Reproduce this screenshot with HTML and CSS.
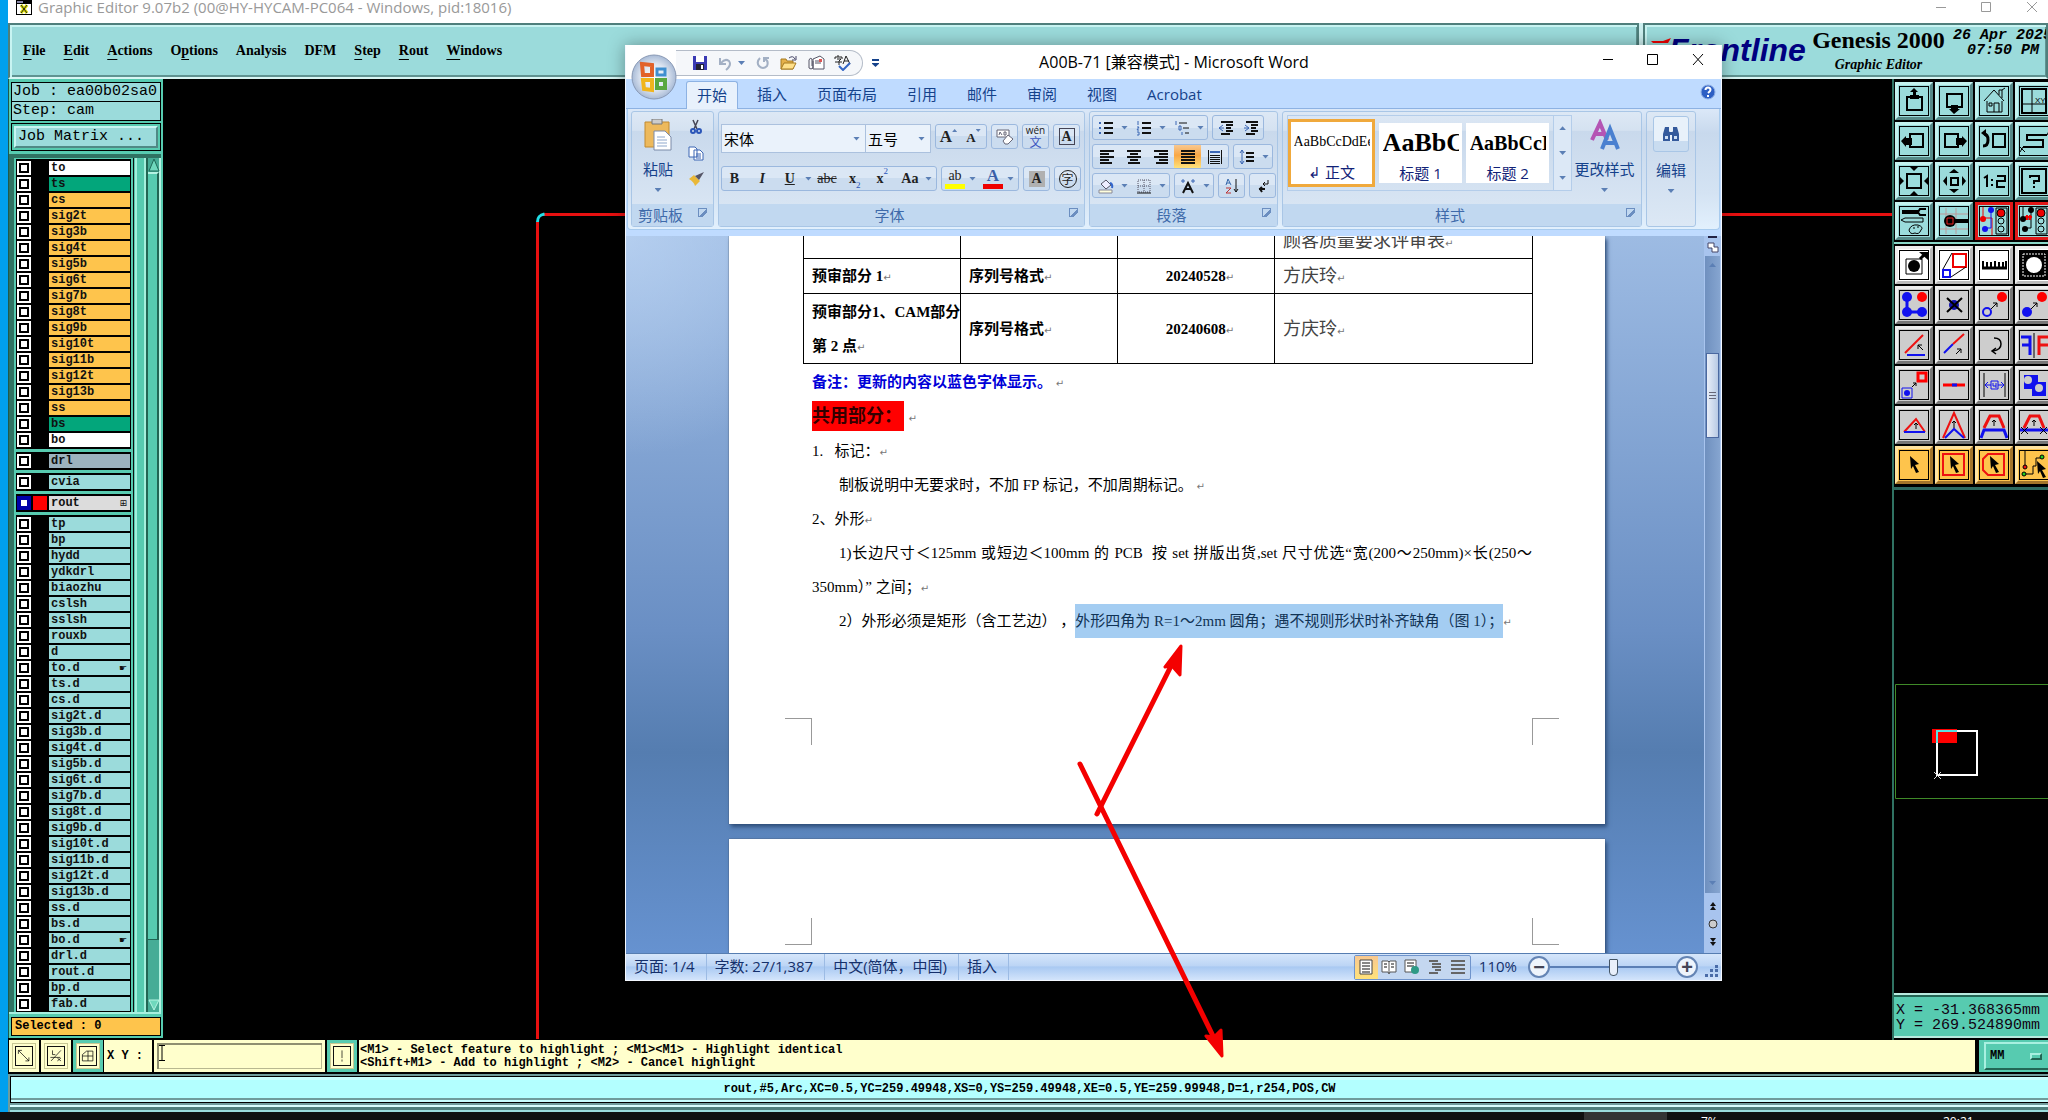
FILE: index.html
```html
<!DOCTYPE html>
<html lang="zh-CN">
<head>
<meta charset="utf-8">
<title>Graphic Editor</title>
<link rel="stylesheet" href="styles.css">
</head>
<body>
<div class="desktop">
<main class="app">
  <header class="app-title">
    <svg class="app-icon" width="16" height="16" viewBox="0 0 16 16"><path d="M0 0h16v15H0z" fill="#000"/><path d="M1 1h6v2H1z" fill="#88a"/><path d="M1 4h14v10H1z" fill="#fff"/><path d="M5 5l6 8M11 5l-6 8" stroke="#dd0" stroke-width="3"/><path d="M5 5l6 8M11 5l-6 8" stroke="#222"/></svg>
    <span>Graphic Editor 9.07b2 (00@HY-HYCAM-PC064 - Windows, pid:18016)</span>
    <svg class="app-ctl" width="110" height="16" viewBox="0 0 110 16" fill="none" stroke="#999"><path d="M4 7.500h10M49.500 2.500h9v9h-9zM95 2l10 10M105 2l-10 10"/></svg>
  </header>
  <div class="topbar">
    <nav class="menu">
      <button><u>F</u>ile</button><button><u>E</u>dit</button><button><u>A</u>ctions</button><button>O<u>p</u>tions</button><button>Analysis</button><button>DFM</button><button><u>S</u>tep</button><button><u>R</u>out</button><button><u>W</u>indows</button>
    </nav>
    <div class="brand">
      <div class="logo"><svg width="22" height="8" viewBox="0 0 22 8"><path d="M0 3h12l8-3-3 5H2z" fill="#e00"/></svg><span>Frontline</span></div>
      <div class="product"><strong>Genesis 2000</strong><em>Graphic Editor</em></div>
      <div class="clock"><span>26 Apr 2025</span><span>07:50 PM</span></div>
    </div>
  </div>
  <div class="work">
    <aside class="layers">
      <div class="info">Job : ea00b02sa0</div>
      <div class="info">Step: cam</div>
      <div class="matrix"><button>Job Matrix ...</button></div>
      <div class="list-wrap">
        <div class="list" id="layer-list"></div>
        <div class="rail"></div>
        <div class="lscroll"><button aria-label="Up"><svg width="12" height="14" viewBox="0 0 12 14"><path d="M6 1l5 12H1z" fill="#6fd8bd" stroke="#1f6a58"/></svg></button><div class="lthumb"></div><button aria-label="Down"><svg width="12" height="12" viewBox="0 0 12 12"><path d="M1 1h10L6 11z" fill="#6fd8bd" stroke="#b4f3e2"/></svg></button></div>
      </div>
      <div class="selected">Selected : 0</div>
    </aside>
    <section class="canvas">
      <svg class="board" width="1400" height="960" viewBox="0 0 1400 960" fill="none"><path d="M8 135.500H1400M2.500 143V960" stroke="#e81010" stroke-width="3"/><path d="M2.500 143c0-5 2-7 7-8" stroke="#22dfe8" stroke-width="3"/></svg>
    </section>
    <aside class="tools">
      <div class="grid teal">
        <button><svg viewBox="0 0 30 30"><path d="M8 11h15v13H8z"/><path class="f" d="M15 2l4 4h-2v3h3v4h-9V9h3V6h-3z"/></svg></button>
        <button><svg viewBox="0 0 30 30"><path d="M8 8h15v13H8z"/><path class="f" d="M15 28l-5-5h2v-4h7v4h2z"/></svg></button>
        <button><svg viewBox="0 0 30 30"><path class="t" d="M5 15L15 4l10 11M8 15v11h15V15M15 26v-9h5v9M10 17h3v3h-3zM20 9V4h3v8M23 4l3-2"/></svg></button>
        <button><svg viewBox="0 0 30 30"><path d="M3 3h24v24H3z"/><path class="t" d="M13 3v24M3 18h24"/><text x="16" y="17" font-size="8">XY</text></svg></button>
        <button><svg viewBox="0 0 30 30"><path d="M11 8h13v13H11z"/><path class="f" d="M2 15l5-5v2h6v7H7v2z"/></svg></button>
        <button><svg viewBox="0 0 30 30"><path d="M6 8h13v13H6z"/><path class="f" d="M28 15l-5-5v2h-6v7h6v2z"/></svg></button>
        <button><svg viewBox="0 0 30 30"><path d="M14 8h12v13H14z"/><path stroke-width="3" d="M5 8q4 0 4 6t-5 6"/><path class="f" d="M2 7l5-4v8z"/></svg></button>
        <button><svg viewBox="0 0 30 30"><path d="M28 9H8v5h16v7H4"/><path class="t" d="M28 9l2-4M4 21l-3 5M1 21l5 5"/></svg></button>
        <button><svg viewBox="0 0 30 30"><path d="M8 8h14v14H8z"/><path class="f" d="M11 1h8l-4 4zM11 29h8l-4-4zM1 11v8l4-4zM29 11v8l-4-4z"/></svg></button>
        <button><svg viewBox="0 0 30 30"><path d="M12 12h7v7h-7z"/><path class="f" d="M15 3l5 4H10zM15 27l5-4H10zM4 15l4-5v10zM27 15l-4-5v10z"/></svg></button>
        <button><svg viewBox="0 0 30 30"><path d="M5 12l3-2v11M13 13v2M13 18v2M18 10h8v5h-8v6h8"/></svg></button>
        <button><svg viewBox="0 0 30 30"><path d="M3 3h24v24H3z"/><path d="M11 12v-2h9v5h-5v3M15 20v2"/></svg></button>
        <button><svg viewBox="0 0 30 30"><path stroke-width="4" d="M3 6h16"/><path d="M27 3h-6l-2 3 2 3h6"/><path class="t" d="M2 14l4-2h18v4H6zM10 24q2-6 9-5 6 2 3 5-2 5-6 3-5 2-6-3M14 22h2M18 21h2"/></svg></button>
        <button><svg viewBox="0 0 30 30"><path stroke="#b99" stroke-width="1" d="M7 2v26M17 2v26M1 8h28M1 23h28"/><circle class="f" cx="11" cy="15" r="6"/><path stroke-width="4" d="M16 15h13"/><path stroke="#e22" stroke-width="1" d="M8 12h6v6H8z"/></svg></button>
        <button class="hot"><svg viewBox="0 0 30 30"><path stroke="#e00" stroke-width="1" d="M4 1v11h9v17"/><path stroke="#11e" stroke-width="1" d="M12 4v18H7"/><circle cx="4" cy="13" r="3" fill="#e00" stroke="none"/><circle cx="12" cy="4" r="3" fill="#11e" stroke="none"/><circle cx="6" cy="23" r="3" fill="#11e" stroke="none"/><path class="t" d="M17 2h11v26H17z"/><circle class="t" cx="22" cy="7" r="4" style="fill:#e00"/><circle class="t" cx="22" cy="15" r="3"/><circle class="t" cx="22" cy="23" r="3"/></svg></button>
        <button class="hot"><svg viewBox="0 0 30 30"><path class="t" d="M4 1v12h8M12 4v18H7"/><path stroke="#e00" d="M6 11h7M8 9v5M11 9v5"/><circle class="f" cx="4" cy="13" r="3"/><circle class="f" cx="12" cy="4" r="3"/><circle class="f" cx="6" cy="23" r="3"/><path class="t" d="M17 2h11v26H17z"/><circle class="t" cx="22" cy="7" r="4" style="fill:#e00"/><circle class="t" cx="22" cy="15" r="3"/><circle class="t" cx="22" cy="23" r="3"/></svg></button>
      </div>
      <div class="grid gray">
        <button class="w"><svg viewBox="0 0 30 30"><path class="t" d="M7 9h16v15H7z"/><circle class="f" cx="15" cy="16" r="6"/><path stroke-width="3" d="M21 9l4-4"/><path class="f" d="M20 2h9v8z"/></svg></button>
        <button class="w"><svg viewBox="0 0 30 30"><path stroke="#e00" d="M14 4h13v13H14z"/><path stroke="#11e" d="M4 20h7v7H4z"/><path class="t" d="M4 19L13 3M12 27l15-10"/></svg></button>
        <button class="w"><svg viewBox="0 0 30 30"><path stroke-width="3" d="M3 18h25"/><path stroke-width="2" d="M4 11v6M8 12v5M12 12v5M16 11v6M20 12v5M24 12v5M27 11v6"/></svg></button>
        <button class="w"><svg viewBox="0 0 30 30"><path class="f" d="M1 1h28v28H1z"/><path stroke="#fff" stroke-width="1" stroke-dasharray="2 1" d="M4 4h22v22H4z"/><circle cx="15" cy="15" r="8" fill="#fff" stroke="none"/></svg></button>
        <button><svg viewBox="0 0 30 30"><path stroke="#11e" stroke-width="3" d="M8 7v15h15"/><g stroke="none"><circle cx="8" cy="7" r="5" fill="#11e"/><circle cx="8" cy="22" r="5" fill="#11e"/><circle cx="23" cy="22" r="5" fill="#11e"/><circle cx="23" cy="7" r="5" fill="#f00"/></g></svg></button>
        <button><svg viewBox="0 0 30 30"><circle cx="15" cy="15" r="5" fill="#11a" stroke="none"/><path d="M8 8l15 14M23 8L8 22"/></svg></button>
        <button><svg viewBox="0 0 30 30"><circle cx="23" cy="7" r="5" fill="#f00" stroke="none"/><circle cx="8" cy="22" r="4" stroke="#11e"/><path class="t" d="M12 19l6-6M14 13h4v4"/></svg></button>
        <button><svg viewBox="0 0 30 30"><circle cx="23" cy="7" r="5" fill="#f00" stroke="none"/><circle cx="8" cy="22" r="5" fill="#11e" stroke="none"/><path class="t" d="M12 19l6-6M14 13h4v4"/></svg></button>
        <button><svg viewBox="0 0 30 30"><path stroke="#e11" d="M6 23L24 5"/><path stroke="#11e" d="M8 25h18"/><path class="t" d="M24 20l-5-5v4M19 15h4"/></svg></button>
        <button><svg viewBox="0 0 30 30"><path stroke="#11e" d="M5 23l9-9"/><path stroke="#e11" d="M14 14l11-10"/><path class="t" d="M17 24l5-5M18 19h4v4"/></svg></button>
        <button><svg viewBox="0 0 30 30"><path stroke-width="1.500" d="M15 8q7 0 7 6t-8 7M17 18l-4 3 4 3"/></svg></button>
        <button><svg viewBox="0 0 30 30"><path stroke="#11e" stroke-width="3" d="M2 7h9v18M3 15h8"/><path class="t" d="M15 3v25"/><path stroke="#e11" stroke-width="3" d="M29 7h-9v18M20 15h9"/></svg></button>
        <button><svg viewBox="0 0 30 30"><path stroke="#f00" stroke-width="3" d="M19 3h8v8h-8z"/><path stroke="#11e" stroke-width="1" d="M3 18h10v10H3z"/><circle cx="8" cy="23" r="3" fill="#11e" stroke="none"/><path class="t" d="M13 17l4-4M14 13h3v3"/></svg></button>
        <button><svg viewBox="0 0 30 30"><path stroke="#f00" d="M4 15h22" stroke-width="3"/><path stroke="#11e" stroke-width="3" d="M13 15h5"/></svg></button>
        <button><svg viewBox="0 0 30 30"><path class="t" d="M5 3v24M26 3v24"/><path stroke="#11e" stroke-width="1" d="M12 11h7v8h-7zM6 15h6M19 15h6M9 12l-3 3 3 3M22 12l3 3-3 3M14 13v3h3M17 13v5"/></svg></button>
        <button><svg viewBox="0 0 30 30"><path fill="#11e" stroke="none" d="M5 5h14v7h8v14H13v-7H5z"/><circle cx="9" cy="10" r="4" fill="#ccc" stroke="none"/><circle cx="20" cy="18" r="5" fill="#ccc" stroke="#11e"/></svg></button>
        <button><svg viewBox="0 0 30 30"><path stroke="#e11" d="M5 22L17 9l9 13"/><path stroke="#11e" d="M5 22h21"/><path class="t" d="M17 19v-6M15 15l2-2 2 2"/></svg></button>
        <button><svg viewBox="0 0 30 30"><path stroke="#e11" d="M4 28L15 3l11 25"/><path stroke="#11e" d="M6 28l9-9 10 9"/><path class="t" d="M15 18v-7M13 13l2-2 2 2"/></svg></button>
        <button><svg viewBox="0 0 30 30"><path stroke="#e11" stroke-width="3" d="M5 18l6-12h9l5 12"/><path stroke="#11e" stroke-width="3" d="M2 28l3-8h20l3 8"/><path class="t" d="M15 16v-6M13 12l2-2 2 2"/></svg></button>
        <button><svg viewBox="0 0 30 30"><path stroke="#e11" stroke-width="3" d="M5 18l6-12h9l5 12"/><path stroke="#11e" stroke-width="3" d="M1 20h28"/><path class="t" d="M15 16v-6M13 12l2-2 2 2M2 17l7 7M9 17l-7 7M21 17l7 7M28 17l-7 7"/></svg></button>
        <button class="o"><svg viewBox="0 0 30 30"><path class="f" d="M11 6l9 8-4 1 4 7-3 1-3-7-2 3z"/></svg></button>
        <button class="o"><svg viewBox="0 0 30 30"><path stroke="#e11" d="M4 4h21v21H4z"/><path class="f" d="M11 6l9 8-4 1 4 7-3 1-3-7-2 3z"/></svg></button>
        <button class="o"><svg viewBox="0 0 30 30"><path stroke="#e11" d="M9 4h16v21H9l-5-5V9z"/><path class="f" d="M11 6l9 8-4 1 4 7-3 1-3-7-2 3z"/></svg></button>
        <button class="o"><svg viewBox="0 0 30 30"><path class="t" d="M6 1v16M6 24h8v-8h3V8h5"/><circle class="t" cx="6" cy="17" r="2" style="fill:#e11"/><circle class="t" cx="5" cy="24" r="2" style="fill:#2c2"/><circle class="t" cx="23" cy="7" r="2" style="fill:#2c2"/><path class="f" d="M18 11l9 8-4 1 4 7-3 1-3-7-2 3z"/></svg></button>
      </div>
      <div class="overview"><svg width="156" height="504" viewBox="0 0 156 504" fill="none"><path d="M1.500 194.500h160v114H1.500z" stroke="#3f8a28"/><path d="M38 239h25v14H38z" fill="#f00"/><path d="M43 241h40v44H43z" stroke="#fff" stroke-width="2"/><path d="M43 253v-12h20" stroke="#5ae0e0" stroke-width="2"/><path d="M40 282l7 7M47 282l-7 7" stroke="#ddd"/></svg></div>
      <div class="coords"><span>X = -31.368365mm</span><span>Y = 269.524890mm</span></div>
    </aside>
  </div>
  <div class="command">
    <button class="cmd"><svg viewBox="0 0 20 20"><path d="M2 7V2h5M2 2l15 15M12 17h5v-5"/></svg></button>
    <button class="cmd"><svg viewBox="0 0 20 20"><path d="M3 17L17 2M5 2v6h4M2 12h14M12 13l5 4M12 17l5-4"/></svg></button>
    <button class="cmd on"><svg viewBox="0 0 20 20"><path d="M2 17V8l6-5h9v14zM10 3v14M2 10h15"/></svg></button>
    <label for="xy">X Y :</label>
    <div class="xy-box"><input id="xy" class="xy" type="text" value=""><svg class="ibeam" width="6" height="16" viewBox="0 0 6 16"><path d="M0 .5h6M0 15.500h6M3 0v16" fill="none" stroke="#000"/></svg></div>
    <button class="cmd on"><svg viewBox="0 0 20 20"><path d="M10 2v11M10 15v3"/></svg></button>
    <div class="hint"><span>&lt;M1&gt; - Select feature to highlight ; &lt;M1&gt;&lt;M1&gt; - Highlight identical</span><span>&lt;Shift+M1&gt; - Add to highlight ; &lt;M2&gt; - Cancel highlight</span></div>
    <div class="unit"><button>MM<i></i></button></div>
  </div>
  <footer class="status"><div class="status-in">rout,#5,Arc,XC=0.5,YC=259.49948,XS=0,YS=259.49948,XE=0.5,YE=259.99948,D=1,r254,POS,CW</div><div class="status-edge"></div></footer>
</main>
<div class="taskbar"><span class="task-on"></span><span class="pct">7%</span><span class="time">20:21</span></div>

<section class="word">
  <header class="w-title">
    <div class="qat">
      <button aria-label="保存"><svg width="16" height="16" viewBox="0 0 16 16"><path d="M1 1h14v14H1z" fill="#3a3ab4"/><path d="M4 1h8v6H4z" fill="#fff"/><path d="M4 9h8v6H4z" fill="#223"/><path d="M9 10h2v4H9z" fill="#fff"/></svg></button>
      <button aria-label="撤消"><svg width="16" height="16" viewBox="0 0 16 16"><path d="M3 3v6h6M4 8q4-5 8-2 3 4-3 9" fill="none" stroke="#a3b0c4" stroke-width="2"/></svg></button>
      <i class="dd"></i>
      <button aria-label="重复"><svg width="16" height="16" viewBox="0 0 16 16"><path d="M5 3q-4 4-1 8 4 4 8 0 2-5-2-7M9 7V3h5" fill="none" stroke="#a3b0c4" stroke-width="2"/></svg></button>
      <button aria-label="打开"><svg width="18" height="16" viewBox="0 0 18 16"><path d="M1 14V4h5l1 2h6v8z" fill="#e5b04a" stroke="#a67a20"/><path d="M1 14l3-6h12l-3 6z" fill="#ffe08a" stroke="#a67a20"/><path d="M9 3q4-3 6 1M16 1v4h-4" fill="none" stroke="#446"/></svg></button>
      <button aria-label="邮件"><svg width="18" height="16" viewBox="0 0 18 16" fill="#fff" stroke="#556"><path d="M6 4l7-3 4 3v10H6z"/><path d="M8 6h6M8 8h6" /><path d="M12 4h3v3h-3z" fill="#d55" stroke="none"/><path d="M6 6v7q-2 2-4 0V5q1-3 3-1v7" fill="none"/></svg></button>
      <button aria-label="拼写"><svg width="18" height="16" viewBox="0 0 18 16" fill="none" stroke="#222"><path d="M4 0v2M1 4V2h7v2M3 4h4L5 6v4M1 7h7M9 9l3-8 4 8M10 6h5"/><path d="M5 11l4 4 7-7" stroke="#3466c4" stroke-width="2"/></svg></button>
    </div>
    <i class="qat-more"></i>
    <h1>A00B-71 [兼容模式] - Microsoft Word</h1>
    <svg class="w-ctl" width="106" height="16" viewBox="0 0 106 16" fill="none" stroke="#000"><path d="M2 8.500h10M46.500 3.500h10v10h-10zM92 3l10 11M102 3L92 14"/></svg>
  </header>
  <button class="orb" aria-label="Office"><svg width="46" height="46" viewBox="0 0 46 46"><defs><radialGradient id="orb"><stop offset="0" stop-color="#fff"/><stop offset=".6" stop-color="#dde5f1"/><stop offset="1" stop-color="#a9bbd6"/></radialGradient></defs><circle cx="23" cy="23" r="22" fill="url(#orb)" stroke="#8898b4"/><g fill="none" stroke-width="4"><path d="M21 11l-10-1 1 11h9z" stroke="#e2622a"/><path d="M26 15h8v6h-8z" stroke="#3f8fd0" stroke-width="3"/><path d="M12 26h9v10l-8-1z" stroke="#f0b51e"/><path d="M26 26h8v8h-8z" stroke="#5aa840"/></g></svg></button>
  <nav class="tabs"><button class="on">开始</button><button>插入</button><button>页面布局</button><button>引用</button><button>邮件</button><button>审阅</button><button>视图</button><button>Acrobat</button>
    <svg class="help" width="16" height="16" viewBox="0 0 16 16"><circle cx="8" cy="8" r="7" fill="#2d5fc4" stroke="#8fb0e4"/><path d="M5.500 6q0-2.500 2.500-2.500T10.500 6q0 1-2.500 3M8 11v2" fill="none" stroke="#fff" stroke-width="2"/></svg></nav>
  <div class="ribbon">
    <section class="g g-clip"><div class="gb">
      <button class="big"><svg width="28" height="32" viewBox="0 0 28 32"><path d="M1 3h24v25H1z" fill="#edb95c" stroke="#c18a30"/><path d="M8 0h10v5H8z" fill="#ccc" stroke="#777"/><path d="M10 12h11l6 6v13H10z" fill="#fff" stroke="#7a8aa8"/><path d="M13 18h8M13 21h10M13 24h10M13 27h10" stroke="#8fa8cc"/></svg><span>粘贴</span><i class="dd"></i></button>
      <div class="vs">
        <button aria-label="剪切"><svg width="16" height="16" viewBox="0 0 16 16" fill="none"><path d="M5 1l4 9M10 1L6 10" stroke="#445" stroke-width="1.500"/><circle cx="5" cy="12" r="2" stroke="#2a55b8" stroke-width="2"/><circle cx="11" cy="12" r="2" stroke="#2a55b8" stroke-width="2"/></svg></button>
        <button aria-label="复制"><svg width="16" height="16" viewBox="0 0 16 16" fill="#fff" stroke="#3c66b4"><path d="M1 2h6l2 2v8H1zM6 5h6l3 3v7H6z"/><path d="M8 9h5M8 11h5M8 13h5"/></svg></button>
        <button aria-label="格式刷"><svg width="16" height="16" viewBox="0 0 16 16"><path d="M1 8l5-4 6 6-5 5q-1-4-6-7z" fill="#e9b838"/><path d="M7 5l4 4 5-8z" fill="#556"/></svg></button>
      </div></div><footer>剪贴板<b class="lch"></b></footer></section>
    <section class="g g-font"><div class="gb col">
      <div class="r"><div class="sel-box fname"><select aria-label="字体"><option>宋体</option></select><i class="dd"></i></div><div class="sel-box fsize"><select aria-label="字号"><option>五号</option></select><i class="dd"></i></div>
        <div class="bg"><button class="s20">A<i class="dd up"></i></button><button class="s14">A<i class="dd"></i></button></div>
        <div class="bg"><button aria-label="清除格式"><svg width="18" height="16" viewBox="0 0 18 16" fill="#fff" stroke="#667"><path d="M1 1h12v7H1z"/><path d="M3 6l1-3 2 3M8 3h2v3H8zM7 12l5-6 5 4-5 5H9z"/></svg></button></div>
        <div class="bg"><button class="wen"><small>wén</small><span>文</span></button></div>
        <div class="bg"><button><b class="boxed">A</b></button></div></div>
      <div class="r"><div class="bg biu"><button><b>B</b></button><button><b><i>I</i></b></button><button><b><u>U</u></b></button><i class="dd"></i><button><s>abc</s></button><button><b>x</b><sub>2</sub></button><button><b>x</b><sup>2</sup></button><button><b>Aa</b></button><i class="dd"></i></div>
        <div class="bg hl"><button class="sw y">ab</button><i class="dd"></i><button class="sw rd">A</button><i class="dd"></i></div>
        <div class="bg"><button><b class="shade">A</b></button></div>
        <div class="bg"><button aria-label="带圈字符"><span class="ring">字</span></button></div></div>
    </div><footer>字体<b class="lch"></b></footer></section>
    <section class="g g-para"><div class="gb col">
      <div class="r"><div class="bg"><button><svg class="ic" viewBox="0 0 16 16"><path class="k" d="M6 3h9M6 8h9M6 13h9"/><path class="b" d="M1 3h2M1 8h2M1 13h2"/></svg></button><i class="dd"></i><button><svg class="ic" viewBox="0 0 16 16"><path class="k" d="M6 3h9M6 8h9M6 13h9"/><path class="b n" d="M2 1v4M1 7h2l-2 3h2M1 12h2v3H1"/></svg></button><i class="dd"></i><button><svg class="ic" viewBox="0 0 16 16"><path class="k n" d="M5 3h8M9 8h6M11 13h4"/><path class="b n" d="M2 1v4M5 6h2v4H5zM8 12v3"/></svg></button><i class="dd"></i></div>
        <div class="bg"><button><svg class="ic" viewBox="0 0 16 16"><path class="k" d="M3 2h12M8 5h7M8 8h5M8 11h7M3 14h9"/><path class="b n" d="M5 5L1 8l4 3M1 8h5"/></svg></button><button><svg class="ic" viewBox="0 0 16 16"><path class="k" d="M3 2h12M8 5h7M8 8h5M8 11h7M3 14h9"/><path class="b n" d="M2 5l4 3-4 3M1 8h5"/></svg></button></div></div>
      <div class="r"><div class="bg al"><button><svg class="ic" viewBox="0 0 16 16"><path class="k" d="M1 2h14M1 5h9M1 8h14M1 11h9M1 14h12"/></svg></button><button><svg class="ic" viewBox="0 0 16 16"><path class="k" d="M1 2h14M4 5h8M1 8h14M4 11h8M2 14h12"/></svg></button><button><svg class="ic" viewBox="0 0 16 16"><path class="k" d="M1 2h14M6 5h9M1 8h14M6 11h9M3 14h12"/></svg></button><button class="hi"><svg class="ic" viewBox="0 0 16 16"><path class="k" d="M1 2h14M1 5h14M1 8h14M1 11h14M1 14h14"/></svg></button><button><svg class="ic" viewBox="0 0 16 16"><path class="k n" d="M3 6.500h10M3 8.500h10M3 10.500h10M3 12.500h10M3 14.500h10M1.500 1v14M14.500 1v14"/><path class="b" d="M3 3h10"/></svg></button></div>
        <div class="bg"><button><svg class="ic" viewBox="0 0 16 16"><path class="k" d="M7 4h8M7 8h8M7 12h8"/><path class="b n" d="M3 1v14M1 4l2-3 2 3M1 12l2 3 2-3"/></svg></button><i class="dd"></i></div></div>
      <div class="r"><div class="bg"><button><svg class="ic" viewBox="0 0 16 16"><path d="M3 6l5-4 5 5-5 4z" fill="#eef" stroke="#556"/><path d="M12 5q3 1 2 5" stroke="#36c" fill="none" stroke-width="2"/><path d="M1 12h13v3H1z" fill="#ffd" stroke="#889"/></svg></button><i class="dd"></i><button><svg class="ic" viewBox="0 0 16 16"><path d="M2 2h12v12H2zM8 2v12M2 8h12" fill="none" stroke="#556" stroke-dasharray="1 1"/><path class="k n" d="M1 15h14"/></svg></button><i class="dd"></i></div>
        <div class="bg"><button><svg class="ic" viewBox="0 0 16 16"><path class="k" d="M3 15L8 5l5 10M5 11h6"/><path class="b n" d="M1 3h4M3 1v4M11 3h4M13 1v4"/></svg></button><i class="dd"></i></div>
        <div class="bg"><button><svg class="ic" viewBox="0 0 16 16" fill="none"><path d="M2 7l2-6 3 6M3 5h3" stroke="#36a"/><path d="M2 10h5l-5 5h5" stroke="#b33"/><path d="M12 1v13M10 11l2 3 2-3" stroke="#111"/></svg></button></div>
        <div class="bg"><button><svg class="ic" viewBox="0 0 16 16"><path class="k n" d="M13 2v4H8M10 4L8 6l2 2"/><path class="k" d="M4 11h6M7 9l-2 2 2 3"/></svg></button></div></div>
    </div><footer>段落<b class="lch"></b></footer></section>
    <section class="g g-style"><div class="gb">
      <div class="gallery"><button class="st on"><span class="p1">AaBbCcDdEe</span><span>↲ 正文</span></button><button class="st"><span class="p2">AaBbCc</span><span>标题 1</span></button><button class="st"><span class="p3">AaBbCcD</span><span>标题 2</span></button><div class="gs"><i class="dd up"></i><i class="dd"></i><i class="dd"></i></div></div>
      <button class="big"><svg width="32" height="32" viewBox="0 0 32 32"><g fill="none" stroke-width="4"><path d="M3 21L11 4l7 17M6 15h9" stroke="#b455b4"/><path d="M13 30l8-20 8 20M15 24h12" stroke="#4a80d0"/></g></svg><span>更改样式</span><i class="dd"></i></button>
    </div><footer>样式<b class="lch"></b></footer></section>
    <section class="g g-edit"><button class="big"><span class="bino"><svg width="18" height="16" viewBox="0 0 18 16"><path d="M3 1h4v4l1 2v8H1V8zM11 1h4l2 7v7h-7V7l1-2z" fill="#345a9c"/><path d="M7 6h4v3H7z" fill="#345a9c"/><path d="M3 10h3v3H3zM12 10h3v3h-3z" fill="#cfe0f5"/></svg></span><span>编辑</span><i class="dd"></i></button></section>
  </div>
  <div class="docview">
    <div class="pages">
      <article class="page">
        <table class="rev">
          <colgroup><col class="c1"><col class="c1"><col class="c1"><col></colgroup>
          <tr><td></td><td></td><td></td><td class="nm">顾客质量要求评审表<i class="m">↵</i></td></tr>
          <tr><td>预审部分 1<i class="m">↵</i></td><td>序列号格式<i class="m">↵</i></td><td class="c">20240528<i class="m">↵</i></td><td class="nm">方庆玲<i class="m">↵</i></td></tr>
          <tr><td>预审部分1、CAM部分<br>第 2 点<i class="m">↵</i></td><td>序列号格式<i class="m">↵</i></td><td class="c">20240608<i class="m">↵</i></td><td class="nm">方庆玲<i class="m">↵</i></td></tr>
        </table>
        <div class="body">
          <p class="note">备注：更新的内容以蓝色字体显示。 <i class="m">↵</i></p>
          <p class="head"><mark>共用部分：</mark> <i class="m">↵</i></p>
          <p>1.&nbsp;&nbsp; 标记：<i class="m">↵</i></p>
          <p class="in">制板说明中无要求时，不加 FP 标记，不加周期标记。 <i class="m">↵</i></p>
          <p>2、外形<i class="m">↵</i></p>
          <p class="in1">1)长边尺寸＜125mm 或短边＜100mm 的 PCB&nbsp; 按 set 拼版出货,set 尺寸优选“宽(200～250mm)×长(250～350mm）” 之间；<i class="m">↵</i></p>
          <p class="in">2）外形必须是矩形（含工艺边） ，<span class="sel">外形四角为 R=1～2mm 圆角；遇不规则形状时补齐缺角（图 1）；</span><i class="m">↵</i></p>
        </div>
        <div class="crops bot"><i></i><i></i></div>
      </article>
      <article class="page next"><div class="crops top"><i></i><i></i></div></article>
    </div>
    <div class="vscroll"><b class="split"></b><svg width="14" height="14" viewBox="0 0 14 14"><path d="M2 3h6v4h4v5H6V8H2z" fill="#fff" stroke="#446"/></svg><div class="track"><i class="dd up"></i><div class="vthumb"></div><i class="dd"></i></div><svg width="14" height="58" viewBox="0 0 14 58"><path d="M7 7l3 4H4zM7 11l3 4H4zM7 47l3-4H4zM7 51l3-4H4z" fill="#111"/><circle cx="7" cy="29" r="4" fill="#ccc" stroke="#333"/></svg></div>
  </div>
  <footer class="w-status">
    <span>页面: 1/4</span><span>字数: 27/1,387</span><span>中文(简体，中国)</span><span>插入</span>
    <div class="views"><button class="on"><svg class="ic" viewBox="0 0 16 16"><path d="M2 1h12v14H2z" fill="#fff" stroke="#444"/><path class="k n" d="M4 4h8M4 7h8M4 10h8M4 13h8"/></svg></button><button><svg class="ic" viewBox="0 0 16 16"><path d="M1 2h6l1 1 1-1h6v11H9l-1 2-1-2H1zM8 3v11" fill="#fff" stroke="#555"/><path class="k n" d="M3 5h3M3 8h3M10 5h3M10 8h3"/></svg></button><button><svg class="ic" viewBox="0 0 16 16"><path d="M1 1h11v12H1z" fill="#fff" stroke="#555"/><path class="k n" d="M3 4h7M3 7h7"/><circle cx="11" cy="11" r="4" fill="#2e9a86"/></svg></button><button><svg class="ic" viewBox="0 0 16 16"><path class="g1" d="M2 2h9M5 5h9M5 8h9M8 11h6M2 14h9"/></svg></button><button><svg class="ic" viewBox="0 0 16 16"><path class="g1" d="M1 2h14M1 6h14M1 10h14M1 14h14"/></svg></button></div>
    <span class="pctz">110%</span>
    <button class="zb" aria-label="缩小">−</button><input class="zoom" type="range" aria-label="缩放" min="0" max="100" value="50"><button class="zb" aria-label="放大">+</button>
    <svg class="grip" width="15" height="15" viewBox="0 0 15 15"><path d="M11 2h3v3h-3zM6 6h3v3H6zM11 6h3v3h-3zM1 11h3v3H1zM6 11h3v3H6zM11 11h3v3h-3z" fill="#4a6ca8"/></svg>
  </footer>
</section>
<svg class="arrows" width="170" height="430" viewBox="1070 635 170 430"><g stroke="#f40000" stroke-width="5" stroke-linecap="round" fill="#f40000"><path d="M1097 814L1172 664"/><path d="M1080 764L1215 1040"/></g><path d="M1181 646L1165 667L1172 666L1180 675ZM1222 1056L1206 1036L1214 1037L1221 1030Z" fill="#f40000" stroke="#f40000" stroke-width="3" stroke-linejoin="round"/></svg>
</div>
<script src="app.js"></script>
</body>
</html>
```
FILE: app.js
```js
const sig = [];
for (let i = 2; i <= 13; i++) sig.push("sig" + i + (i % 2 ? "b" : "t"));
const groups = [
  ["to", "ts", "cs", ...sig, "ss", "bs", "bo"],
  ["drl"], ["cvia"], ["rout"],
  ["tp", "bp", "hydd", "ydkdrl", "biaozhu", "cslsh", "sslsh", "rouxb", "d", "to.d", "ts.d", "cs.d",
   ...sig.map(s => s + ".d"), "ss.d", "bs.d", "bo.d", "drl.d", "rout.d", "bp.d", "fab.d"]
];
const kinds = { to: "white", bo: "white", ts: "green", bs: "green", drl: "slate", rout: "current" };
const marks = { rout: "⊞", "to.d": "☛", "bo.d": "☛" };
const list = document.getElementById("layer-list");
groups.forEach((names, g) => {
  const box = document.createElement("div");
  box.className = "lgroup";
  names.forEach(name => {
    const row = document.createElement("label");
    row.className = "lrow " + (kinds[name] || (g === 0 ? "amber" : "aqua"));
    row.innerHTML = '<input type="checkbox"><i></i><span>' + name + "<b>" + (marks[name] || "") + "</b></span>";
    box.append(row);
  });
  list.append(box);
});
```
FILE: styles.css
```css
* { box-sizing: border-box; }
html, body { height: 100%; }
body { margin: 0; overflow: hidden; background: #000; font-family: "Open Sans", "Noto Sans CJK SC", sans-serif; }
button { margin: 0; padding: 0; border: 0; background: none; font: inherit; color: inherit; }
.desktop { position: relative; height: 100vh; display: flex; flex-direction: column; overflow: hidden; background: #00a0ee; }
.app { flex: 1; min-height: 0; margin-left: 8px; display: flex; flex-direction: column; background: #000; }
.app-title { height: 23px; flex: none; display: flex; align-items: center; gap: 6px; padding: 0 6px 8px 8px; background: #fff; color: #999; font-size: 15px; line-height: 15px; white-space: nowrap; }
.app-ctl { margin-left: auto; }

.topbar { height: 56px; flex: none; display: flex; gap: 4px; background: #ccefef; }
.menu, .brand { border: 2px solid #4f7f7c; border-bottom: 2px solid #d8f6f4; box-shadow: inset 2px 2px #c8f4f2, inset -1px -2px #5f9391; background: #9bdbdb; display: flex; }
.menu { flex: 1; align-items: center; gap: 18px; padding-left: 13px; font: bold 14px "Liberation Serif", serif; color: #000; }
.menu u { text-underline-offset: 4px; }
.brand { width: 405px; flex: none; overflow: hidden; padding-left: 6px; }
.logo { position: relative; width: 163px; flex: none; color: #000080; font: italic bold 32px/32px "Liberation Sans", sans-serif; padding: 9px 0 0 18px; }
.logo svg { position: absolute; left: 0; top: 13px; }
.product { width: 129px; flex: none; white-space: nowrap; font-family: "Liberation Serif", serif; color: #000; display: flex; flex-direction: column; align-items: center; }
.product strong { font-size: 24px; line-height: 30px; }
.product em { font-size: 14px; font-weight: bold; line-height: 20px; }
.clock { padding: 3px 0 0 10px; font: italic bold 15px/15px "Liberation Mono", monospace; white-space: nowrap; display: flex; flex-direction: column; }
.clock span + span { padding-left: 14px; }

.work { flex: 1; min-height: 0; display: flex; }
.layers { width: 155px; flex: none; background: #57cbb0; border-left: 1px solid #1f5a4c; padding: 3px 2px 2px 2px; display: flex; flex-direction: column; margin-bottom: 2px; }
.info { height: 20px; margin-bottom: -1px; border: 1px solid #000; background: #9bdbdb; font: 15px/18px "Liberation Mono", monospace; white-space: pre; padding-left: 1px; flex: none; }
.matrix { margin-top: 3px; border: 1px solid #000; padding: 2px; height: 28px; flex: none; display: flex; }
.matrix button { flex: 1; text-align: left; padding-left: 2px; background: #9bdbdb; border: 2px solid #c8f6f2; border-right-color: #4f8985; border-bottom-color: #4f8985; font: 15px/18px "Liberation Mono", monospace; }
.list-wrap { flex: 1; min-height: 0; margin-top: 3px; margin-left: -2px; display: flex; border-top: 4px solid #2f7262; border-bottom: 2px solid #a8f0e0; }
.list { width: 127px; border-left: 5px solid #2f7262; border-right: 1px solid #111; padding: 1px 2px 0 2px; overflow: hidden; }
.lgroup { background: #000; padding: 1px; margin-bottom: 3px; }
.lrow { height: 16px; display: flex; align-items: center; font: bold 12px/14px "Liberation Mono", monospace; color: #111; }
.lrow input { appearance: none; margin: 0; width: 14px; height: 14px; background: #fff; border: 2px solid #fff; outline: 2px solid #000; outline-offset: -4px; }
.lrow i { width: 14px; height: 14px; margin: 0 2px; }
.lrow span { flex: 1; height: 14px; padding: 0 3px 0 2px; background: #9bdbdb; display: flex; justify-content: space-between; }
.lrow b { font: 9px/14px "DejaVu Sans", sans-serif; }
.amber span { background: #fec44c; }
.white span { background: #fff; }
.green span { background: #03a67b; }
.slate span { background: #9cb3bf; }
.current i { background: #f00; }
.current span { background: #dcdcdc; }
.current input { border-color: #0000a8; outline-color: #0000a8; }
.rail { width: 11px; border: solid #a4efdc; border-width: 0 2px; margin-left: 1px; background: #57cbb0; }
.lscroll { width: 15px; border-left: 2px solid #226654; border-right: 2px solid #b4f3e2; background: #46ac96; display: flex; flex-direction: column; }
.lscroll button { height: 14px; line-height: 0; }
.lthumb { flex: 1; margin-bottom: 58px; background: #57cbb0; border-right: 2px solid #226654; border-bottom: 1px solid #226654; border-top: 2px solid #b4f3e2; }
.selected { height: 19px; margin-top: 3px; flex: none; border: 1px solid #000; background: #fec44c; font: bold 12px/17px "Liberation Mono", monospace; padding-left: 3px; }

.canvas { flex: 1; min-width: 0; overflow: hidden; background: #000; padding-left: 372px; }
.board { display: block; }

.tools { width: 156px; flex: none; background: #000; border-left: 2px solid #2f7262; display: flex; flex-direction: column; overflow: hidden; }
.grid { display: grid; grid-template-columns: repeat(4, 38px); gap: 2px; padding: 3px 0 2px 1px; }
.teal { border-bottom: 2px solid #8ad8c8; }
.gray { border-bottom: 3px solid #2f6a60; padding-top: 2px; padding-bottom: 3px; }
.grid button { width: 38px; height: 38px; background: #9bdbdb; border: 3px solid #c4f2ee; border-right-color: #568a88; border-bottom-color: #568a88; padding: 1px; line-height: 0; }
.gray button { background: #cdcdcd; border-color: #eee #777 #777 #eee; }
.gray .w { background: #fff; border-color: #eee #bbb #bbb #eee; }
.gray .o { background: #fec44c; border-color: #ffe3a0 #a4752a #a4752a #ffe3a0; }
.grid .hot { border-color: #e01818; }
.grid svg { width: 30px; height: 30px; fill: none; stroke: #000; stroke-width: 2; outline: 1px solid #000; outline-offset: -1px; }
.grid .f { fill: #000; stroke: none; }
.grid .t { stroke: #000; stroke-width: 1; }
.grid text { fill: #000; stroke: none; font-family: "Liberation Sans", sans-serif; }
.overview { flex: 1; min-height: 0; overflow: hidden; }
.coords { height: 45px; margin-bottom: 2px; flex: none; background: #57cbb0; border-top: 2px solid #b8ebdf; border-bottom: 2px solid #b8ebdf; box-shadow: inset 0 2px #226654; padding: 8px 0 0 2px; font: 15px/15px "Liberation Mono", monospace; white-space: nowrap; color: #101; }
.coords span { display: block; }

.command { height: 34px; flex: none; display: flex; gap: 2px; padding: 0 0 2px 1px; background: #000; overflow: hidden; }
.cmd { width: 30px; padding: 3px; background: #ffffcc; line-height: 0; flex: none; }
.cmd svg { width: 24px; height: 26px; padding: 4px; background: #ffffcc; outline: 1px solid #111; outline-offset: -4px; border: 1px solid #c8c894; fill: none; stroke: #000; stroke-width: 1; }
.cmd.on { background: #57cbb0; }
.command label { width: 48px; margin-left: -1px; background: #ffffcc; font: bold 12px/32px "Liberation Mono", monospace; padding-left: 3px; white-space: nowrap; }
.xy-box { position: relative; width: 171px; display: flex; }
.xy { width: 100%; border: 3px solid #ffffcc; border-radius: 0; background: #ffffcc; box-shadow: inset 2px 2px #8f8f70, inset -1px -1px #b8b890; font: bold 12px "Liberation Mono", monospace; padding: 0 4px; }
.ibeam { position: absolute; left: 5px; top: 5px; }
.hint { flex: 1; background: #ffffcc; padding: 4px 0 0 1px; font: bold 12px/13px "Liberation Mono", monospace; color: #000; }
.hint span { display: block; white-space: nowrap; }
.unit { width: 69px; margin-left: 2px; background: #57cbb0; padding: 2px 0 2px 5px; }
.unit button { width: 70px; height: 28px; border: 2px solid #a8f0e0; border-bottom-color: #226654; font: bold 12px "Liberation Mono", monospace; text-align: left; padding-left: 4px; display: flex; align-items: center; gap: 26px; }
.unit i { width: 12px; height: 7px; border: 2px solid #a8f0e0; border-right-color: #226654; border-bottom-color: #226654; }
.status { height: 38px; flex: none; padding: 2px 0 0 2px; background: #6f9c9c; display: flex; flex-direction: column; gap: 2px; overflow: hidden; }
.status-in { height: 27px; border: 1px solid #000; border-right: 0; background: #b3ffff; box-shadow: inset 0 3px #c8ffff, inset 0 -2px #c8ffff, inset 0 -4px #6f9c9c; text-align: center; font: bold 12px/25px "Liberation Mono", monospace; white-space: nowrap; color: #000; }
.status-edge { height: 7px; border-top: 2px solid #d8ffff; border-bottom: 2px solid #9bdbdb; background: #4f7f7c; }
.taskbar { height: 8px; flex: none; background: #101010; overflow: hidden; display: flex; justify-content: flex-end; color: #fff; font-size: 12px; line-height: 12px; }
.task-on { width: 83px; background: #333; margin-right: 34px; }
.pct { width: 242px; padding-top: 4px; }
.time { width: 105px; padding-top: 4px; }

.word { position: absolute; left: 625px; top: 45px; width: 1097px; height: 936px; border: 1px solid #f4f8ff; border-top-color: #fff; background: #bfdbff; display: flex; flex-direction: column; color: #15428b; box-shadow: 0 0 16px rgba(0, 0, 0, .35); }
.w-title { height: 33px; flex: none; display: flex; background: #fff; padding: 4px 14px 3px 50px; }
.qat { width: 187px; border: 1px solid #b4bcc8; border-left: 0; border-radius: 0 14px 14px 0; background: #f5f7fa; display: flex; align-items: center; padding-left: 16px; gap: 9px; line-height: 0; }
.qat .dd { margin: 0 1px 0 -4px; }
.qat-more { width: 7px; margin: 9px 0 0 9px; height: 8px; background: linear-gradient(#15428b 2px, #fff 2px, #fff 4px, #15428b 4px); clip-path: polygon(0 0, 100% 0, 100% 60%, 50% 100%, 0 60%); }
.w-title h1 { margin: 0; flex: 1; text-align: center; padding-right: 132px; font-size: 16px; line-height: 24px; font-weight: normal; color: #000; white-space: nowrap; }
.w-ctl { margin-top: 1px; }
.orb { position: absolute; left: 5px; top: 8px; width: 46px; height: 46px; line-height: 0; }
.tabs { height: 30px; flex: none; display: flex; padding: 2px 4px 0 60px; border-bottom: 1px solid #8db2e3; font-size: 15px; line-height: 24px; }
.tabs button { height: 28px; padding: 0 11px 2px; margin-right: 8px; white-space: nowrap; }
.tabs .on { background: #e8f1fc; border: 1px solid #8db2e3; border-bottom: 0; border-radius: 3px 3px 0 0; padding: 0 10px 2px; }
.help { margin: 3px 1px 0 auto; }
.ribbon { height: 121px; flex: none; margin: 0 1px; padding: 2px 3px; display: flex; gap: 4px; border: 1px solid #a8cbee; border-top: 0; border-radius: 0 0 4px 4px; background: linear-gradient(#dbe8f8, #c8d9ed 20%, #d4e3f3 70%, #e2f0fd); font-size: 15px; }
.g { border: 1px solid #a9c6e6; border-radius: 3px; display: flex; flex-direction: column; flex: none; background: linear-gradient(#dde8f5, #d5e2f1 16%, #c9d9ec 17%, #dce8f5); }
.gb { flex: 1; min-height: 0; display: flex; padding: 3px 4px; }
.g footer { height: 22px; flex: none; background: #c1d8f0; color: #3e6aaa; display: flex; justify-content: center; align-items: center; position: relative; line-height: 20px; padding-right: 24px; }
.lch { position: absolute; right: 6px; top: 4px; width: 9px; height: 9px; border: solid #6b8ec0; border-width: 1px 0 0 1px; background: linear-gradient(135deg, transparent 50%, #6b8ec0 50%, #6b8ec0 70%, transparent 70%); }
.g-clip { width: 83px; }
.g-font { width: 367px; }
.g-para { width: 189px; }
.g-style { width: 360px; }
.g-edit { width: 50px; padding-top: 4px; align-items: center; }
.dd { width: 7px; height: 4px; background: #5b7fb5; clip-path: polygon(0 0, 100% 0, 50% 100%); flex: none; }
.dd.up { clip-path: polygon(50% 0, 100% 100%, 0 100%); }
.big { display: flex; flex-direction: column; align-items: center; line-height: 20px; white-space: nowrap; padding: 4px 0 0 2px; }
.big > span { margin-top: 8px; }
.big .dd { margin-top: 9px; }
.big svg { display: block; height: 32px; }
.g-clip .big { width: 42px; }
.g-edit .big { padding: 0; }
.g-edit .bino { width: 36px; height: 36px; margin: 0; border: 1px solid #a9c6e6; border-radius: 3px; display: grid; place-items: center; background: linear-gradient(#e8f1fa 70%, #c9dcf0 70%); }
.bino svg { height: 16px; }
.vs { display: flex; flex-direction: column; gap: 10px; padding: 4px 0 0 10px; line-height: 0; }
.col { flex-direction: column; }
.r { display: flex; gap: 4px; }
.g-font .gb { padding: 12px 3px 0 2px; gap: 13px; }
.g-para .gb { padding: 3px 3px 0 2px; gap: 4px; }
.bg { height: 25px; flex: none; border: 1px solid #9bb8de; border-radius: 3px; background: linear-gradient(#dbe7f5 50%, #cbdcef 50%); display: flex; align-items: center; color: #222; font: 14px "Liberation Serif", serif; }
.bg button { min-width: 25px; height: 23px; display: flex; align-items: center; justify-content: center; white-space: nowrap; line-height: 20px; }
.bg sup, .bg sub { font-size: 9px; line-height: 9px; color: #2a55b8; }
.bg sup { align-self: flex-start; } .bg sub { align-self: flex-end; }
.sel-box { height: 29px; display: flex; align-items: center; border: 1px solid #abc1de; background: #eaf2fb; padding-right: 5px; }
.sel-box select { appearance: none; flex: 1; min-width: 0; height: 27px; border: 0; background: none; margin: 0; padding: 0 2px; font: 15px "Open Sans", "Noto Sans CJK SC", sans-serif; color: #000; }
.fname { width: 145px; }
.fsize { width: 66px; margin-left: -5px; }
.bg .s20, .bg .s14 { font-weight: bold; align-items: flex-start; }
.bg .s20 { font-size: 17px; line-height: 23px; } .bg .s14 { font-size: 13px; line-height: 25px; }
.s20 .dd, .s14 .dd { width: 5px; height: 3px; margin-top: 4px; }
.bg .wen { flex-direction: column; font: 12px "Noto Sans CJK SC", sans-serif; color: #3b55c0; }
.wen small { font: 10px/9px "Open Sans", sans-serif; color: #222; }
.wen span { line-height: 13px; }
.boxed { border: 1px solid #445; width: 16px; line-height: 15px; text-align: center; }
.shade { background: #b0b0b0; width: 16px; line-height: 16px; text-align: center; }
.ring { border: 1px solid #222; border-radius: 50%; width: 18px; height: 18px; font: 12px/16px "Noto Sans CJK SC", sans-serif; text-align: center; }
.biu { width: 216px; justify-content: space-between; padding-right: 4px; }
.hl { width: 78px; justify-content: space-between; padding-right: 4px; }
.bg .sw { height: 21px; min-width: 20px; margin-left: 3px; border-bottom: 5px solid #ff0; line-height: 14px; }
.bg .rd { border-color: #e00; color: #3b5fa8; font-size: 17px; font-weight: bold; }
.ic { width: 16px; height: 16px; fill: none; display: block; }
.k { stroke: #111; stroke-width: 2; fill: none; } .b { stroke: #3b66b4; stroke-width: 2; fill: none; } .n { stroke-width: 1; }
.g1 { stroke: #666; stroke-width: 2; }
.g-para .dd { margin: 0 3px; }
.bg .hi { background: linear-gradient(#f8c890, #f9a746 45%, #ffe27a); }
.al button { width: 27px; }
.gallery { width: 285px; height: 76px; border: 1px solid #b4cdea; display: flex; gap: 4px; }
.st { width: 84px; height: 60px; margin-top: 7px; background: #fff; color: #112277; overflow: hidden; display: flex; flex-direction: column; align-items: center; }
.st span { display: block; line-height: 20px; font-size: 15px; }
.st .p1, .st .p2, .st .p3 { width: 76px; height: 40px; line-height: 40px; overflow: hidden; text-align: left; white-space: nowrap; color: #000; font-family: "Liberation Serif", serif; font-size: 14px; }
.st .p2 { font-size: 26px; font-weight: bold; } .st .p3 { font-size: 20px; font-weight: bold; }
.st.on { width: 88px; height: 68px; margin-top: 3px; border: 3px solid #f0a93c; }
.gs { width: 18px; margin-left: auto; display: flex; flex-direction: column; align-items: center; justify-content: space-around; background: #dce8f6; border-left: 1px solid #b4cdea; }
.g-style .big { flex: 1; padding: 4px 0 0 0; }

.docview { flex: 1; min-height: 0; margin-top: 6px; display: flex; background: radial-gradient(circle at 0 0, rgba(190, 214, 244, .7), transparent 220px), linear-gradient(#9dbbe3, #6a8fc4 55%, #557db0 72%, #6692d0); }
.pages { flex: 1; min-width: 0; overflow: hidden; padding-left: 4px; }
.page { width: 876px; min-height: 588px; margin: 0 auto; background: #fff; box-shadow: 2px 3px 4px #2f4f7c, 0 0 1px #444; color: #000; display: flex; flex-direction: column; font: 15px/34px "Liberation Serif", "Noto Sans CJK SC", serif; }
.page.next { margin-top: 15px; }
.rev { width: 730px; margin: -13px 0 0 74px; table-layout: fixed; border-collapse: collapse; font-weight: bold; }
.rev td { height: 35px; padding: 0 0 0 8px; border: 1px solid #000; white-space: nowrap; }
.rev tr:last-child td { height: 70px; }
.rev .c1 { width: 157px; }
.rev .c { text-align: center; }
.rev .nm { font-weight: normal; font-size: 18px; color: #444; }
.m { font: 10px "DejaVu Sans", sans-serif; color: #777; }
.body { margin: 1px 73px 0 83px; }
.body p { margin: 0; text-align: justify; }
.note { color: #0000d8; font-weight: bold; }
.body .head { font-size: 18px; font-weight: bold; line-height: 35px; }
.head mark { background: #f00; color: #300; display: inline-block; line-height: 30px; width: 92px; white-space: nowrap; }
.in { padding-left: 27px; white-space: nowrap; }
.in1 { text-indent: 27px; }
.sel { background: #a4cdf2; color: #113355; display: inline-block; }
.crops { display: flex; justify-content: space-between; margin: auto 46px 79px 56px; }
.crops i { width: 27px; height: 27px; border: 1px solid #999; }
.crops.bot i { border-width: 1px 1px 0 0; }
.crops.bot i + i { border-width: 1px 0 0 1px; }
.crops.top { margin-top: 79px; }
.crops.top i { border-width: 0 1px 1px 0; }
.crops.top i + i { border-width: 0 0 1px 1px; }
.vscroll { width: 17px; flex: none; background: #a8c4ee; display: flex; flex-direction: column; align-items: center; gap: 2px; }
.split { width: 9px; height: 2px; background: #224; }
.track { flex: 1; width: 15px; background: linear-gradient(90deg, #6f90bf, #86a5d0); display: flex; flex-direction: column; align-items: center; padding: 7px 0 8px; }
.vthumb { width: 13px; height: 85px; margin: 86px 0 auto; border: 1px solid #4a68a0; background: linear-gradient(90deg, #e8eef8, #b8cae4); display: grid; place-items: center; }
.vthumb::after { content: ""; width: 7px; height: 8px; background: repeating-linear-gradient(#667 0 1px, transparent 1px 3px); }
.w-status { height: 27px; flex: none; border-top: 1px solid #567db1; display: flex; align-items: center; font-size: 15px; background: linear-gradient(#d6e6fb, #bcd5f5 45%, #a9c9f2 50%, #d3e4fb); color: #15306b; }
.w-status > span { line-height: 24px; padding: 0 11px 2px 8px; border-right: 1px solid #9cbbe4; white-space: nowrap; }
.views { margin-left: auto; display: flex; border: 1px solid #6f94cc; border-radius: 2px; background: #c4d7f0; }
.views button { width: 23px; height: 23px; display: grid; place-items: center; }
.views .on { background: linear-gradient(#f8c890, #ffe27a); }
.w-status > .pctz { border: 0; }
.zb { width: 22px; height: 22px; border: 2px solid #6484b4; border-radius: 50%; background: #eef4fc; font: bold 20px/18px "Liberation Sans", sans-serif; color: #445; }
.zoom { appearance: none; width: 126px; height: 22px; margin: 0; background: linear-gradient(#5b7fb5, #5b7fb5) no-repeat center / 100% 2px; }
.zoom::-webkit-slider-thumb { appearance: none; width: 9px; height: 17px; border: 1px solid #456; background: #e8effa; border-radius: 1px 1px 4px 4px; }
.grip { margin: 6px 2px 0 6px; }
.arrows { position: absolute; left: 1070px; top: 635px; }
```
